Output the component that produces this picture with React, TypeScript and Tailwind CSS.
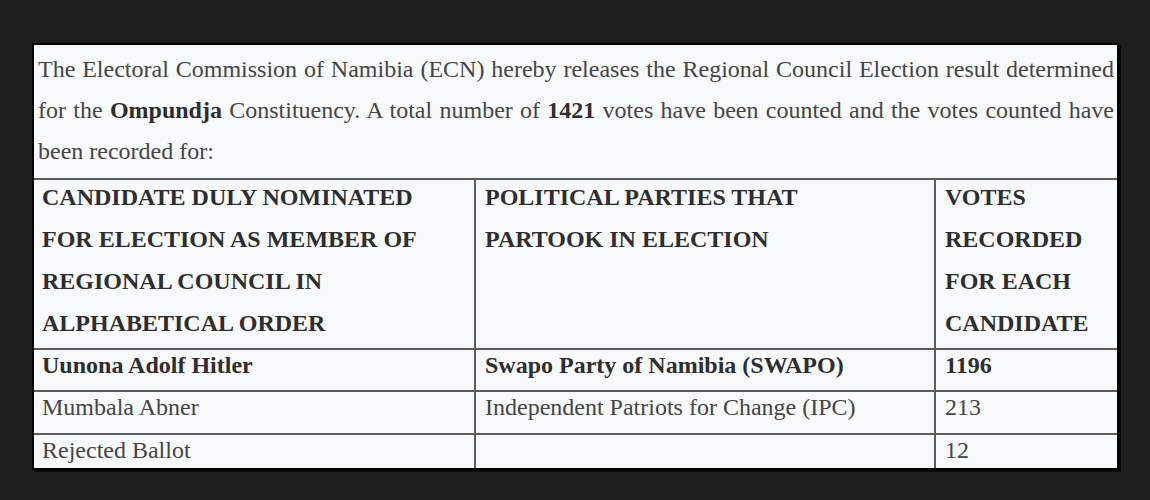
const serif = { fontFamily: '"Liberation Serif", "Times New Roman", serif' };

const header = [
  'CANDIDATE DULY NOMINATED FOR ELECTION AS MEMBER OF REGIONAL COUNCIL IN ALPHABETICAL ORDER',
  'POLITICAL PARTIES THAT PARTOOK IN ELECTION',
  'VOTES RECORDED FOR EACH CANDIDATE',
];

const rows = [
  { name: 'Uunona Adolf Hitler', party: 'Swapo Party of Namibia (SWAPO)', votes: '1196', bold: true, h: 'h-[42px]' },
  { name: 'Mumbala Abner', party: 'Independent Patriots for Change (IPC)', votes: '213', bold: false, h: 'h-[43px]' },
  { name: 'Rejected Ballot', party: '', votes: '12', bold: false, h: 'h-[35px]' },
];

export default function App() {
  return (
    <div className="h-[500px] w-[1150px] bg-[#1e1e1e] pt-[43px] pl-[32px]" style={serif}>
      <div className="w-[1087px] border-2 border-black bg-[#f8f9fb] shadow-[2px_2px_0_#0a0a0a] text-[24px] text-[#454545]">
        <div className="pl-[4px] pr-[3px] pt-[4px] pb-[6px] leading-[41px]">
          <div className="text-justify [text-align-last:justify]">
            The Electoral Commission of Namibia (ECN) hereby releases the Regional Council Election result determined
          </div>
          <div className="text-justify [text-align-last:justify]">
            for the <b className="font-bold text-[#2e2e2e]">Ompundja</b> Constituency. A total number of{' '}
            <b className="font-bold text-[#2e2e2e]">1421</b> votes have been counted and the votes counted have
          </div>
          <div>been recorded for:</div>
        </div>

        <div className="border-t-2 border-[#5c5c5c]">
          <div className="grid grid-cols-[442px_460px_1fr] h-[168px] font-bold text-[#2e2e2e] leading-[42px]">
            <div className="border-r-2 border-[#5c5c5c] pl-[8px] pr-[40px]">
              <div className="-mt-[4px]">{header[0]}</div>
            </div>
            <div className="border-r-2 border-[#5c5c5c] pl-[9px] pr-[120px]">
              <div className="-mt-[4px]">{header[1]}</div>
            </div>
            <div className="pl-[9px] pr-[20px]">
              <div className="-mt-[4px]">{header[2]}</div>
            </div>
          </div>

          {rows.map((r) => (
            <div
              key={r.name}
              className={`grid grid-cols-[442px_460px_1fr] border-t-2 border-[#5c5c5c] leading-[30px] ${r.h} ${
                r.bold ? 'font-bold text-[#2e2e2e]' : ''
              }`}
            >
              <div className="border-r-2 border-[#5c5c5c] pl-[8px]">{r.name}</div>
              <div className="border-r-2 border-[#5c5c5c] pl-[9px]">{r.party}</div>
              <div className="pl-[9px]">{r.votes}</div>
            </div>
          ))}
        </div>
      </div>
    </div>
  );
}
